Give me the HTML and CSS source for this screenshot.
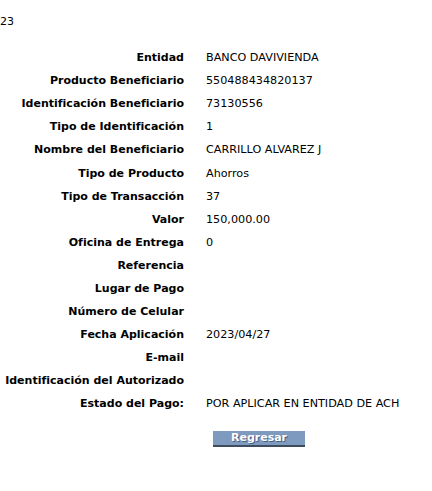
FILE: index.html
```html
<!DOCTYPE html>
<html lang="es">
  <head>
    <meta charset="UTF-8" />
    <title>Detalle del Pago</title>
    <link rel="stylesheet" href="styles.css">
  </head>
  <body>
    <div class="top-ref">23</div>
    <div class="detail">
      <div class="label">Entidad</div><div class="value">BANCO DAVIVIENDA</div>
      <div class="label">Producto Beneficiario</div><div class="value">550488434820137</div>
      <div class="label">Identificación Beneficiario</div><div class="value">73130556</div>
      <div class="label">Tipo de Identificación</div><div class="value">1</div>
      <div class="label">Nombre del Beneficiario</div><div class="value">CARRILLO ALVAREZ J</div>
      <div class="label">Tipo de Producto</div><div class="value">Ahorros</div>
      <div class="label">Tipo de Transacción</div><div class="value">37</div>
      <div class="label">Valor</div><div class="value">150,000.00</div>
      <div class="label">Oficina de Entrega</div><div class="value">0</div>
      <div class="label">Referencia</div><div class="value"></div>
      <div class="label">Lugar de Pago</div><div class="value"></div>
      <div class="label">Número de Celular</div><div class="value"></div>
      <div class="label">Fecha Aplicación</div><div class="value">2023/04/27</div>
      <div class="label">E-mail</div><div class="value"></div>
      <div class="label">Identificación del Autorizado</div><div class="value"></div>
      <div class="label">Estado del Pago:</div><div class="value">POR APLICAR EN ENTIDAD DE ACH</div>
    </div>
    <div class="actions">
      <button type="button" class="back-btn">Regresar</button>
    </div>
  </body>
</html>
```

FILE: styles.css
```css
body {
  margin: 0;
  background-color: #fff;
  color: #000;
  font-family: "DejaVu Sans", Verdana, sans-serif;
  font-size: 11px;
}

.top-ref {
  padding-top: 15px;
  height: 31px;
  line-height: 14px;
}

.detail {
  display: grid;
  grid-template-columns: 184px 1fr;
  column-gap: 22px;
  grid-auto-rows: 23.1px;
  align-items: center;
}

.label {
  text-align: right;
  font-weight: bold;
  white-space: nowrap;
}

.value {
  font-size: 11.2px;
  white-space: nowrap;
}

.actions {
  padding-top: 15px;
  padding-left: 213px;
}

.back-btn {
  width: 92px;
  height: 16px;
  padding: 0;
  border: none;
  border-bottom: 2px solid #3e4c60;
  background-color: #7f9abf;
  color: #fff;
  font-family: "DejaVu Sans", Verdana, sans-serif;
  font-size: 11px;
  font-weight: bold;
  line-height: 14px;
  text-shadow: 1px 1px 0 #4a5f80;
  cursor: pointer;
}
```
